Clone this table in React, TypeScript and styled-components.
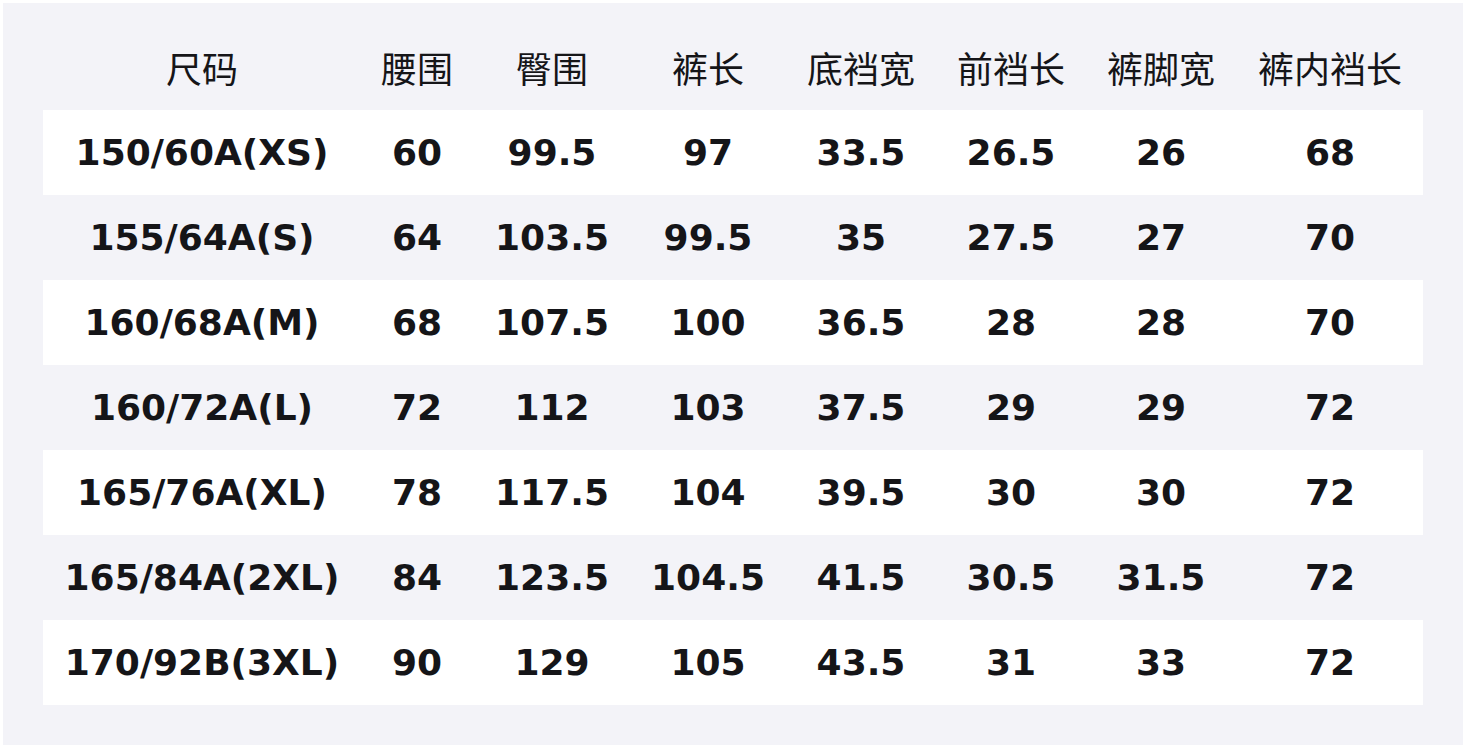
import React from "react";
import styled, { createGlobalStyle } from "styled-components";

const headers = ["尺码", "腰围", "臀围", "裤长", "底裆宽", "前裆长", "裤脚宽", "裤内裆长"];

const rows = [
    ["150/60A(XS)", "60", "99.5", "97", "33.5", "26.5", "26", "68"],
    ["155/64A(S)", "64", "103.5", "99.5", "35", "27.5", "27", "70"],
    ["160/68A(M)", "68", "107.5", "100", "36.5", "28", "28", "70"],
    ["160/72A(L)", "72", "112", "103", "37.5", "29", "29", "72"],
    ["165/76A(XL)", "78", "117.5", "104", "39.5", "30", "30", "72"],
    ["165/84A(2XL)", "84", "123.5", "104.5", "41.5", "30.5", "31.5", "72"],
    ["170/92B(3XL)", "90", "129", "105", "43.5", "31", "33", "72"],
];

const columns = "318px 112px 158px 154px 152px 148px 152px 186px";

export default function App() {
    return (
        <>
            <GlobalStyle />
            <Panel>
                <HeaderRow>
                    {headers.map((h, i) => (
                        <HeadCell key={i}>{h}</HeadCell>
                    ))}
                </HeaderRow>
                {rows.map((row, i) => (
                    <Row key={i} $striped={i % 2 === 0}>
                        {row.map((cell, j) => (
                            <Cell key={j}>{cell}</Cell>
                        ))}
                    </Row>
                ))}
            </Panel>
        </>
    );
}

const GlobalStyle = createGlobalStyle`
    body {
        margin: 0;
        background: #ffffff;
        font-family: "DejaVu Sans", "Noto Sans CJK SC", sans-serif;
        color: #151518;
    }
`;

const Panel = styled.div`
    margin: 3px;
    width: 1460px;
    height: 742px;
    box-sizing: border-box;
    padding: 0 40px 40px;
    background: #f3f3f8;
`;

const HeaderRow = styled.div`
    display: grid;
    grid-template-columns: ${columns};
    align-items: end;
    height: 107px;
    box-sizing: border-box;
    padding-bottom: 18px;
`;

const HeadCell = styled.div`
    text-align: center;
    font-family: "Noto Sans CJK SC", "DejaVu Sans", sans-serif;
    font-size: 36px;
    line-height: 50px;
    font-weight: 400;
`;

const Row = styled.div<{ $striped: boolean }>`
    display: grid;
    grid-template-columns: ${columns};
    align-items: center;
    height: 85px;
    background: ${({ $striped }) => ($striped ? "#ffffff" : "transparent")};
`;

const Cell = styled.div`
    text-align: center;
    font-size: 36px;
    font-weight: 700;
    white-space: nowrap;
`;
